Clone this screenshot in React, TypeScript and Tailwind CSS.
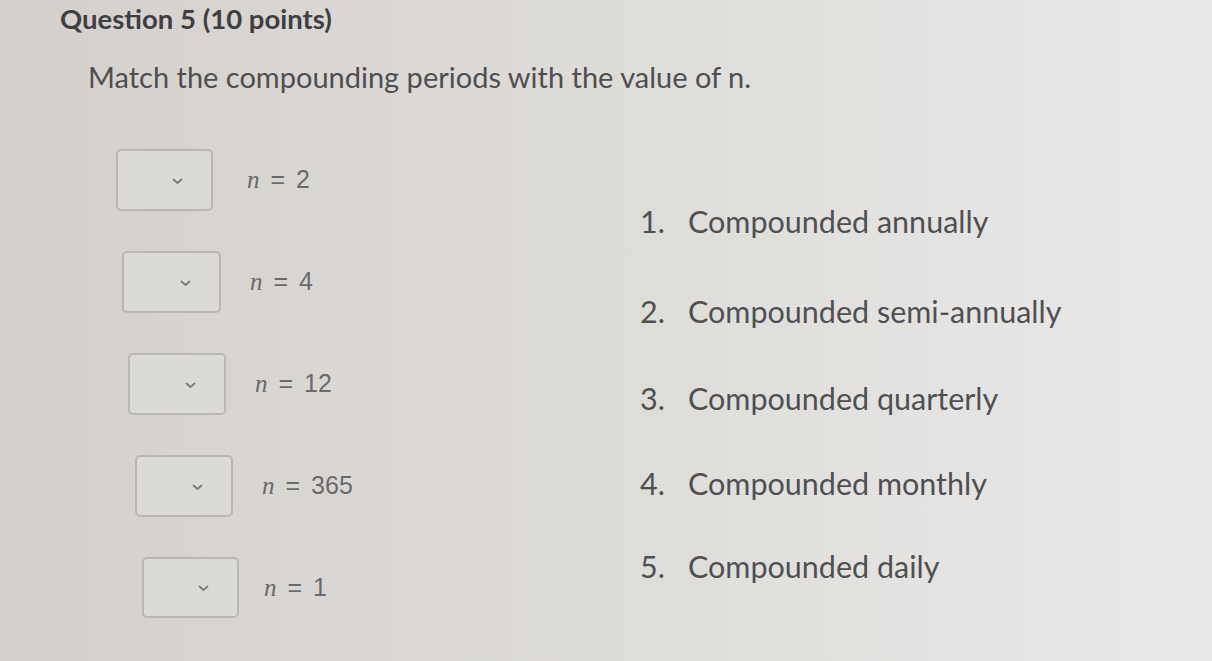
import React from "react";

const rows = [
  { ml: "ml-[116px]", label: "2", h: "h-[62px]", w: "w-[97px]", gap: "ml-[34px]" },
  { ml: "ml-[122px]", label: "4", h: "h-[62px]", w: "w-[99px]", gap: "ml-[29px]" },
  { ml: "ml-[128px]", label: "12", h: "h-[62px]", w: "w-[98px]", gap: "ml-[29px]" },
  { ml: "ml-[135px]", label: "365", h: "h-[62px]", w: "w-[98px]", gap: "ml-[29px]" },
  { ml: "ml-[142px]", label: "1", h: "h-[61px]", w: "w-[97px]", gap: "ml-[25px]" },
];

const Chevron = () => (
  <svg width="11" height="7" viewBox="0 0 11 7" fill="none" className="mt-[2px]">
    <path d="M1.5 1.5 L5.5 5 L9.5 1.5" stroke="#7a7a7a" strokeWidth="1.8" strokeLinecap="round" strokeLinejoin="round" />
  </svg>
);

const items = [
  { n: "1.", t: "Compounded annually", mt: "mt-[205px]" },
  { n: "2.", t: "Compounded semi-annually", mt: "mt-[58px]" },
  { n: "3.", t: "Compounded quarterly", mt: "mt-[55px]" },
  { n: "4.", t: "Compounded monthly", mt: "mt-[53px]" },
  { n: "5.", t: "Compounded daily", mt: "mt-[51px]" },
];

export default function App() {
  return (
    <div
      className="relative w-[1212px] h-[661px] overflow-hidden bg-gradient-to-r from-[#d3d0cc] via-[#dedcd9] to-[#e9e9e8]"
      style={{ fontFamily: "Lato, 'Noto Sans', sans-serif" }}
    >
      <div className="flex h-full">
        <div className="w-[600px] shrink-0">
          <h1 className="ml-[60px] mt-[2px] text-[27.5px] font-bold leading-[34px] text-[#3f3e42] whitespace-nowrap">
            Question 5 (10 points)
          </h1>
          <p className="ml-[88px] mt-[23px] text-[29px] leading-[36px] text-[#4f4e50] whitespace-nowrap">
            Match the compounding periods with the value of n.
          </p>
          <div className="mt-[54px] flex flex-col gap-[40px]">
            {rows.map((r, i) => (
              <div key={i} className={`flex items-center ${r.ml}`}>
                <div
                  className={`${r.w} ${r.h} rounded-[5px] border-2 border-[#b9b7b4] bg-[#dcdad7] flex items-center justify-end pr-[28px]`}
                >
                  <Chevron />
                </div>
                <div
                  className={`${r.gap} text-[25px] text-[#6a6a6c] whitespace-nowrap`}
                  style={{ fontFamily: "'Liberation Sans', sans-serif" }}
                >
                  <span className="italic" style={{ fontFamily: "'Liberation Serif', serif" }}>
                    n
                  </span>
                  <span className="mx-[11px]">=</span>
                  <span>{r.label}</span>
                </div>
              </div>
            ))}
          </div>
        </div>
        <div className="flex flex-col">
          {items.map((it, i) => (
            <div key={i} className={`flex items-center ${it.mt} ml-[40px] text-[30.5px] leading-[32px] text-[#505052] whitespace-nowrap`}>
              <span className="w-[48px]">{it.n}</span>
              <span>{it.t}</span>
            </div>
          ))}
        </div>
      </div>
    </div>
  );
}
